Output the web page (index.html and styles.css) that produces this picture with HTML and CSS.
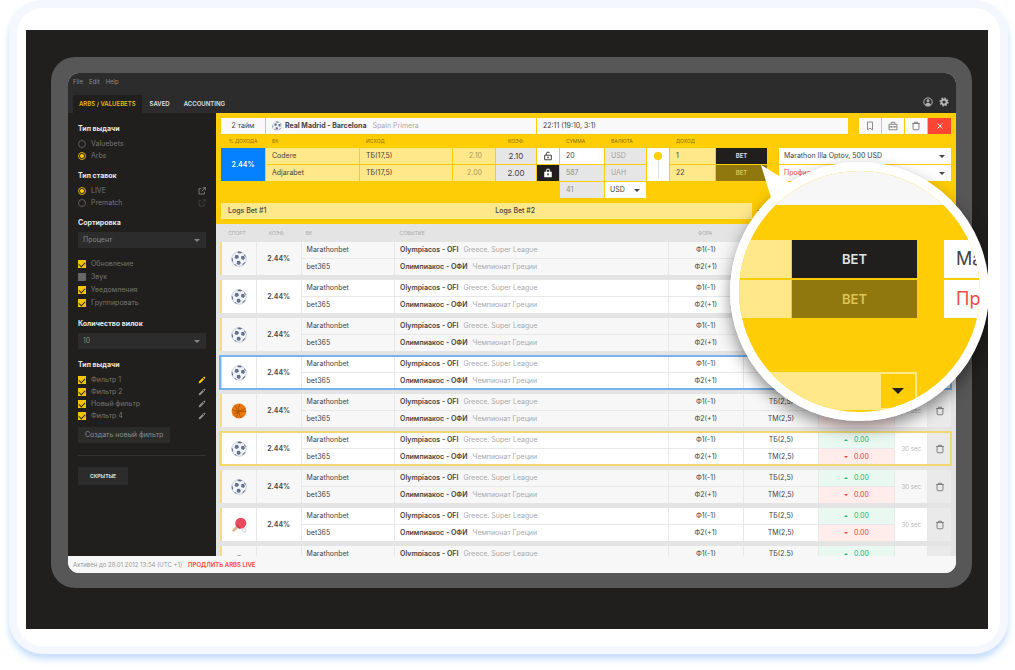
FILE: index.html
```html
<!DOCTYPE html>
<html lang="ru">
<head>
<meta charset="utf-8">
<title>Arbs / Valuebets</title>
<link rel="stylesheet" href="styles.css">
</head>
<body>
<svg class="sprite" aria-hidden="true">
  <symbol id="football" viewBox="0 0 16 16"><circle cx="8" cy="8" r="7.3" fill="#f0f3f8" stroke="#b9c1d0" stroke-width=".7"/><g fill="#66708c"><path d="M4.500 3.700l2.800.500.600 2.200-2 1.600L3.500 7zM10.200 5.300l2.400-.500 1.400 2.200-1.400 2.100-2.400-1zM6 10l2.800-.200 1.100 2.200-1.700 1.900-2.500-.900z"/><path d="M6.200.9c2-.6 3.700-.2 4.900.5l-1.500 1.200-2.300-.4zM.8 6.700l1 1.100.3 2.500-.8.4C.7 9.500.6 8 .8 6.700zM2.900 13l2 .5 1 1.400c-1.200-.3-2.200-1-3-1.900zM11.700 12.700l2.300-1.700.3.700c-.7 1.200-1.700 2.200-3 2.800zM13 3l1.400 1.600.3 1.900-1.200-1.300z"/></g></symbol>
  <symbol id="basketball" viewBox="0 0 16 16"><circle cx="8" cy="8" r="7.4" fill="#e87a0c"/><path d="M1 6.500c4 2.500 9 2 13.500-1.500M9 .8c-2 4-2 9 1 14M2 12.500c2-3 7-4.500 13-4M3.500 2.300c3 2.500 3.500 8 2 12.500" fill="none" stroke="#9a4a0c" stroke-width=".7"/></symbol>
  <symbol id="pingpong" viewBox="0 0 16 16"><path d="M5.400 8.800l1.900 1.900-4.500 4.400-1.900-1.700z" fill="#dcb28a"/><circle cx="9.800" cy="6.200" r="5.500" fill="#e84a5f"/><path d="M4.700 8.200l3.400 3.500 1.200-.4-4.300-4.400z" fill="#b3384a"/><circle cx="13.300" cy="13.300" r="1.900" fill="#f3f5f8" stroke="#b9c1d0" stroke-width=".6"/></symbol>
  <symbol id="trash" viewBox="0 0 12 12"><path d="M1.500 3h9M4 3V1.500h4V3M2.500 3v6.500q0 1 1 1h5q1 0 1-1V3" fill="none" stroke="currentColor" stroke-width="1.100"/></symbol>
  <symbol id="bookmark" viewBox="0 0 12 12"><path d="M3 1.200h6v9.500L6 8.700l-3 2z" fill="none" stroke="currentColor"/></symbol>
  <symbol id="case" viewBox="0 0 12 12"><path d="M1.200 4h9.600v6.500H1.200zM3.800 4V1.600h4.400V4M1.200 7h9.600M4 6v2M8 6v2" fill="none" stroke="currentColor"/></symbol>
  <symbol id="cross" viewBox="0 0 12 12"><path d="M3 3l6 6M9 3l-6 6" stroke="currentColor" stroke-width="1.100"/></symbol>
  <symbol id="lock-open" viewBox="0 0 12 12"><path d="M2 5h8v5.500H2zM4 5V3.300Q4 1.300 6 1.300q1.600 0 2 1.200" fill="none" stroke="currentColor" stroke-width="1.200"/><circle cx="6" cy="7.700" r="1" fill="currentColor"/></symbol>
  <symbol id="lock" viewBox="0 0 12 12"><path d="M4 5V3.300Q4 1.300 6 1.300t2 2V5" fill="none" stroke="currentColor" stroke-width="1.200"/><path fill-rule="evenodd" d="M1.500 4.500h9V11h-9zM6 6.700a1 1 0 1 0 .1 0z" fill="currentColor"/></symbol>
  <symbol id="user" viewBox="0 0 12 12"><circle cx="6" cy="6" r="5" fill="none" stroke="currentColor" stroke-width="1.200"/><circle cx="6" cy="4.500" r="1.700" fill="currentColor"/><path d="M2.600 9.200Q3.200 7 6 7t3.400 2.200Q6 12 2.600 9.200z" fill="currentColor"/></symbol>
  <symbol id="gear" viewBox="0 0 12 12"><circle cx="6" cy="6" r="3.100" fill="none" stroke="currentColor" stroke-width="2.400"/><circle cx="6" cy="6" r="4.600" fill="none" stroke="currentColor" stroke-width="1.800" stroke-dasharray="1.800 1.810"/></symbol>
  <symbol id="open" viewBox="0 0 12 12"><path d="M5 2.500H1.500v8h8V7M7 1h4v4M11 1L5.500 6.500" fill="none" stroke="currentColor" stroke-width="1.200"/></symbol>
  <symbol id="pencil" viewBox="0 0 12 12"><path d="M1 11l.5-2.700L6.800 3l2.200 2.200-5.300 5.300zM7.500 2.300L9.300.8l2 2-1.600 1.700z" fill="currentColor"/></symbol>
</svg>

<div class="card">
  <div class="stage">
    <div class="device">
      <div class="screen">
        <header>
          <nav class="menu"><a href="#">File</a><a href="#">Edit</a><a href="#">Help</a></nav>
          <div class="bar">
            <nav class="tabs"><a class="tab active" href="#">ARBS / VALUEBETS</a><a class="tab" href="#">SAVED</a><a class="tab" href="#">ACCOUNTING</a></nav>
            <div class="account">
              <button aria-label="Profile"><svg class="icon-m"><use href="#user"/></svg></button>
              <button aria-label="Settings"><svg class="icon-m"><use href="#gear"/></svg></button>
            </div>
          </div>
        </header>

        <div class="body">
          <aside>
            <section>
              <h2>Тип выдачи</h2>
              <label class="opt"><input type="radio" name="kind">Valuebets</label>
              <label class="opt"><input type="radio" name="kind" checked>Arbs</label>
            </section>
            <section>
              <h2>Тип ставок</h2>
              <div class="line"><label class="opt"><input type="radio" name="bets" checked>LIVE</label><button aria-label="Open live"><svg class="icon-s"><use href="#open"/></svg></button></div>
              <div class="line"><label class="opt"><input type="radio" name="bets">Prematch</label><button class="faint" aria-label="Open prematch"><svg class="icon-s"><use href="#open"/></svg></button></div>
            </section>
            <section class="field">
              <h2><label for="sort">Сортировка</label></h2>
              <div class="select dark"><select id="sort"><option>Процент</option></select></div>
            </section>
            <section class="checks">
              <label class="opt"><input type="checkbox" checked>Обновление</label>
              <label class="opt"><input type="checkbox">Звук</label>
              <label class="opt"><input type="checkbox" checked>Уведомления</label>
              <label class="opt"><input type="checkbox" checked>Группировать</label>
            </section>
            <section class="field">
              <h2><label for="count">Количество вилок</label></h2>
              <div class="select dark"><select id="count"><option>10</option></select></div>
            </section>
            <section>
              <h2>Тип выдачи</h2>
              <div class="line"><label class="opt"><input type="checkbox" checked>Фильтр 1</label><button class="gold" aria-label="Edit"><svg class="icon-s"><use href="#pencil"/></svg></button></div>
              <div class="line"><label class="opt"><input type="checkbox" checked>Фильтр 2</label><button aria-label="Edit"><svg class="icon-s"><use href="#pencil"/></svg></button></div>
              <div class="line"><label class="opt"><input type="checkbox" checked>Новый фильтр</label><button aria-label="Edit"><svg class="icon-s"><use href="#pencil"/></svg></button></div>
              <div class="line"><label class="opt"><input type="checkbox" checked>Фильтр 4</label><button aria-label="Edit"><svg class="icon-s"><use href="#pencil"/></svg></button></div>
              <button class="create">Создать новый фильтр</button>
            </section>
            <hr>
            <button class="hidden-bets">СКРЫТЫЕ</button>
          </aside>

          <main>
            <div class="calc">
              <div class="match">
                <div class="white center">2 тайм</div>
                <div class="white title"><svg class="icon-m"><use href="#football"/></svg><b>Real Madrid - Barcelona</b><span class="muted">Spain Primera</span></div>
                <div class="white">22:11 (19:10, 3:1)</div>
                <span></span>
                <button class="tool" aria-label="Save"><svg class="icon-m"><use href="#bookmark"/></svg></button>
                <button class="tool" aria-label="Accounting"><svg class="icon-m"><use href="#case"/></svg></button>
                <button class="tool" aria-label="Delete"><svg class="icon-m"><use href="#trash"/></svg></button>
                <button class="tool close" aria-label="Close"><svg class="icon-m"><use href="#cross"/></svg></button>
              </div>
              <div class="grid labels">
                <span class="center">% ДОХОДА</span><span>БК</span><span>ИСХОД</span><span></span><span class="center">КОЭФ.</span><span></span><span>СУММА</span><span>ВАЛЮТА</span><span></span><span>ДОХОД</span>
              </div>
              <div class="grid stakes">
                <div class="percent">2.44%</div>
                <div class="pale">Codere</div><div class="pale">ТБ(17,5)</div><div class="pale right muted2">2.10</div><div class="grey coef">2.10</div>
                <button class="lock" aria-label="Lock"><svg class="icon-m"><use href="#lock-open"/></svg></button>
                <input class="amount" aria-label="Сумма 1" value="20"><div class="grey off">USD</div>
                <div class="slider"><input type="range" aria-label="Баланс" value="0"></div>
                <div class="pale">1</div><button class="bet">BET</button><span></span>
                <div class="select light"><select aria-label="Счёт 1"><option>Marathon Illa Optov, 500 USD</option></select></div>

                <div class="pale second">Adjarabet</div><div class="pale">ТБ(17,5)</div><div class="pale right muted2">2.00</div><div class="grey coef">2.00</div>
                <button class="lock on" aria-label="Unlock"><svg class="icon-m"><use href="#lock"/></svg></button>
                <input class="amount grey" aria-label="Сумма 2" value="587"><div class="grey off">UAH</div>
                <div class="pale income">22</div><button class="bet dim">BET</button><span></span>
                <div class="select light"><select class="red" aria-label="Счёт 2"><option>Профиль</option></select></div>

                <input class="amount grey total" aria-label="Итого" value="41">
                <div class="select light currency"><select aria-label="Валюта"><option>USD</option></select></div>
              </div>
              <div class="logs"><span>Logs Bet #1</span><span>Logs Bet #2</span><button class="tri" aria-label="Expand"></button></div>
            </div>

            <div class="list">
              <table>
                <thead><tr><th>СПОРТ</th><th>КОЭФ.</th><th>БК</th><th>СОБЫТИЕ</th><th>ФОРА</th><th>ТОТАЛ</th><th></th><th></th><th></th></tr></thead>
              </table>
            </div>
          </main>
        </div>
        <footer><span>Активен до 28.01.2012 13:54 (UTC +1)</span><a href="#">ПРОДЛИТЬ ARBS LIVE</a></footer>
      </div>
    </div>

    <div class="magnifier">
      <svg class="pointer" viewBox="0 0 46 46"><path d="M0 0L42 26 14 46z" fill="#fff"/></svg>
      <div class="lens">
        <div class="lens-top"></div>
        <div class="lens-grid">
          <div class="pale"></div><button class="bet">BET</button><span></span><div class="name">Ма</div>
          <div class="pale"></div><button class="bet dim">BET</button><span></span><div class="name red">Пр</div>
        </div>
        <div class="lens-logs"><button aria-label="Expand"></button></div>
      </div>
    </div>
  </div>
</div>
<script src="app.js"></script>
</body>
</html>
```

FILE: styles.css
```css
* { box-sizing: border-box; }
body { margin: 0; background: #fff; font: 7px/16px Inter, "Noto Sans", sans-serif; color: #44433f; }
h2 { margin: 0; font-size: 7px; line-height: 12px; color: #e8e8e8; }
a { color: inherit; text-decoration: none; }
button, input, select { margin: 0; padding: 0; border: 0; border-radius: 0; background: none; font: inherit; color: inherit; appearance: none; }
button { display: flex; align-items: center; justify-content: center; }
.sprite { display: none; }
.icon-s { width: 8px; height: 8px; display: block; }
.icon-m { width: 10px; height: 10px; display: block; flex: none; }
.center { text-align: center; }

.card { margin: 0 7px 16px 9px; border: 8px solid #f4f8fe; border-radius: 34px; padding: 22px 12px 17px 9px; box-shadow: 0 5px 7px #c4ddfa; background: #fff; }
.stage { position: relative; overflow: hidden; background: #201f1d; padding: 27px 16px 41px 25px; }
.device { background: #575757; border-radius: 24px; padding: 16px 16px 15px 17px; }
.screen { border-radius: 11px; overflow: hidden; background: #f7f7f7; }

header { background: #2c2c2c; color: #8b8b8b; }
.menu { display: flex; gap: 6px; padding: 1px 5px 0; font-size: 6px; }
.bar { display: flex; justify-content: space-between; padding: 5px 7px 0 5px; }
.tabs { display: flex; gap: 2px; font-size: 6px; font-weight: 600; color: #e0e0e0; }
.tab { padding: 1px 6px; }
.active { background: #201f1d; color: #e2b90c; }
.account { display: flex; gap: 6px; color: #b5b5b5; padding-bottom: 5px; }

.body { display: grid; grid-template-columns: 148fr 740fr; }
aside { background: #201f1d; color: #757575; padding: 10px 10px 0; }
section { margin-bottom: 8px; }
section h2 { margin-bottom: 3px; }
.field { margin-bottom: 10px; }
.opt { display: flex; align-items: center; gap: 5px; line-height: 12px; }
.line { display: flex; justify-content: space-between; align-items: center; color: #8d8d8d; }
.line .opt { color: #757575; }
.line .faint { color: #444; }
.line .gold { color: #ffcd05; }
.opt input { width: 8px; height: 8px; display: grid; place-items: center; }
.opt input[type=radio] { border: 1px solid #5c5c5c; border-radius: 50%; }
.opt input[type=radio]:checked { border-color: #d8ae08; }
.opt input[type=radio]:checked::after { content: ""; width: 4px; height: 4px; border-radius: 50%; background: #ffcd05; }
.opt input[type=checkbox] { background: #666; }
.opt input[type=checkbox]:checked { background: #f3c30a; }
.opt input[type=checkbox]:checked::after { content: ""; width: 5px; height: 3px; border: solid #35300f; border-width: 0 0 1px 1px; transform: rotate(-45deg); }
.checks { display: grid; gap: 1px; margin-bottom: 9px; }
.select { display: grid; align-items: center; }
.select select { grid-area: 1 / 1; width: 100%; height: 16px; padding: 0 5px; }
.select::after { content: ""; grid-area: 1 / 1; justify-self: end; margin-right: 6px; border: solid transparent; border-width: 3px 3px 0; border-top-color: currentColor; pointer-events: none; }
.dark { background: #2c2c2c; color: #858585; }
.light { background: #fff; }
.red, .select .red { color: #ef4b45; }
.create { background: #2b2b2a; color: #8b8b8b; padding: 0 7px; margin-top: 5px; }
hr { border: 0; border-top: 1px solid #333230; margin: 12px 0 11px; }
.hidden-bets { background: #2c2c2c; color: #e0e0e0; font-size: 5px; font-weight: 700; padding: 1px 12px; }

main { background: #e4e4e4; min-width: 0; }
.calc { background: #ffcd05; padding: 5px; }
.match { display: grid; gap: 1px; grid-template-columns: 44fr 270fr 311fr 9fr 22fr 22fr 22fr 23fr; }
.white { background: #f9f9f9; padding: 0 6px; white-space: nowrap; }
.title { display: flex; align-items: center; gap: 3px; }
.title .muted { margin-left: 3px; }
.muted { color: #aaa; }
.tool { background: #f9f9f9; color: #777; }
.close { background: #ff4436; color: #fff; }
.grid { display: grid; gap: 1px; grid-template-columns: 44fr 93fr 92fr 42fr 40fr 22fr 44fr 41fr 22fr 45fr 51fr 10fr 172fr; }
.labels { font-size: 5px; line-height: 14px; color: #8a7006; }
.labels span { padding-left: 6px; }
.labels .center { padding: 0; }
.stakes > * { min-width: 0; }
.percent { grid-row: 1 / span 2; background: #0580ff; color: #fff; display: grid; place-items: center; font-weight: 600; }
.pale { background: #ffe88a; padding: 0 6px; }
.second { grid-column: 2; }
.right { text-align: right; padding-right: 13px; }
.muted2 { color: #a79b62; }
.grey { background: #e6e6e6; }
.coef { text-align: center; font-size: 8px; }
.off { color: #a2a2a2; padding: 0 6px; }
.lock { background: #fff; }
.lock.on { background: #201f1d; color: #fff; }
.amount { background: #fff; padding: 0 6px; height: 16px; width: 100%; }
.amount.grey { background: #e6e6e6; color: #8a8a8a; }
.slider { grid-row: 1 / span 2; grid-column: 9; background: #fff; display: grid; place-items: center; }
.slider input { writing-mode: vertical-lr; width: 8px; height: 26px; background: linear-gradient(#ddd, #ddd) center / 1px 100% no-repeat; }
.slider input::-webkit-slider-thumb { appearance: none; width: 8px; height: 8px; border-radius: 50%; background: #ffcd05; }
.income { grid-column: 10; }
.bet { background: #201f1d; color: #e4e4e4; font-size: 6px; font-weight: 600; }
.bet.dim { background: #90780f; color: #dfc355; }
.total { grid-column: 7; }
.logs { display: grid; grid-template-columns: 267fr 264fr 16fr; width: 75%; margin-top: 5px; font-weight: 500; background: #ffe88a; }
.logs span { padding-left: 7px; }
.tri { background: #ffcd05; }
.tri::after { content: ""; border: solid transparent; border-width: 3px 3px 0; border-top-color: #44433f; }

.list { height: 332px; overflow: hidden; padding: 0 5px 0 4px; }
table { display: grid; gap: 5px; }
thead tr, tbody { display: grid; grid-template-columns: 34fr 44fr 93fr 274fr 75fr 74fr 76fr 32fr 23fr; column-gap: 1px; }
thead { display: block; font-size: 5px; color: #aaa; line-height: 18px; margin-bottom: -5px; }
th { font-weight: 400; padding: 0; text-align: center; min-width: 0; }
th:nth-child(3), th:nth-child(4) { text-align: left; padding-left: 6px; }
tbody { row-gap: 1px; background: #e8e8e8; border-left: 2px solid #f5dc80; }
tbody tr { display: contents; }
td { padding: 0 5px; background: #fff; white-space: nowrap; min-width: 0; }
.shade td { background: #f7f7f7; }
td[rowspan] { grid-row: 1 / span 2; display: grid; place-items: center; padding: 0; }
.book { grid-column: 3; }
.event { grid-column: 4; }
.handicap { grid-column: 5; }
.totals { grid-column: 6; }
.up, .down { grid-column: 7; }
.ball { width: 16px; height: 16px; display: block; }
.sport { grid-column: 1; }
.pct { grid-column: 2; font-weight: 600; }
td.handicap, td.totals { text-align: center; }
td b { margin-right: 5px; font-weight: 600; }
td.up, td.down { display: flex; align-items: center; justify-content: center; gap: 6px; }
tbody td.up { background: #e9f9f1; color: #24b574; }
tbody td.down { background: #ffeceb; color: #ee423f; }
.up::before, .down::before { content: ""; border: 2px solid transparent; }
.up::before { border-width: 0 2px 2px; border-bottom-color: currentColor; }
.down::before { border-width: 2px 2px 0; border-top-color: currentColor; }
td.sec { grid-column: 8; color: #b5b5b5; font-size: 6px; }
tbody td.del { grid-column: 9; background: #eaeaea; color: #777; }
.blue { outline: 2px solid #75b2f0; outline-offset: -1px; }
.yellow { outline: 2px solid #f2d873; outline-offset: -1px; }

footer { display: flex; gap: 6px; padding: 0 5px; font-size: 6px; line-height: 17px; color: #999; background: #f7f7f7; }
footer a { color: #ff4436; font-size: 6px; font-weight: 600; }

.magnifier { position: absolute; top: 132px; right: -1px; width: 259px; height: 259px; border-radius: 50%; box-shadow: 0 7px 16px rgba(0, 0, 0, .45); }
.pointer { position: absolute; left: 31px; top: 3px; width: 46px; height: 46px; }
.lens { position: absolute; inset: 0; overflow: hidden; border: 9px solid #fff; border-radius: 50%; background: #ffcd05; font-size: 18px; line-height: 38px; }
.lens-top { height: 34px; background: #f7f7f7; }
.lens-grid { display: grid; grid-template-columns: 52fr 125fr 25fr 36fr; gap: 2px 1px; margin-top: 35px; }
.lens .bet { font-size: 13px; font-weight: 600; }
.name { background: #fff; padding-left: 12px; white-space: nowrap; overflow: hidden; }
.lens-logs { display: flex; justify-content: flex-end; width: 178px; margin-top: 54px; padding: 2px; background: #ffe88a; }
.lens-logs button { width: 34px; height: 34px; background: #ffcd05; }
.lens-logs button::after { content: ""; border: solid transparent; border-width: 6px 6px 0; border-top-color: #201f1d; }
```

FILE: app.js
```js
const matches = [
  { ball: "football", cls: "shade" },
  { ball: "football", cls: "" },
  { ball: "football", cls: "shade" },
  { ball: "football", cls: "blue" },
  { ball: "basketball", cls: "shade" },
  { ball: "football", cls: "yellow" },
  { ball: "football", cls: "shade" },
  { ball: "pingpong", cls: "" },
  { ball: "football", cls: "shade" }
];

document.querySelector("table").insertAdjacentHTML("beforeend", matches.map(m => `
  <tbody class="${m.cls}">
    <tr>
      <td rowspan="2" class="sport"><svg class="ball"><use href="#${m.ball}"/></svg></td>
      <td rowspan="2" class="pct">2.44%</td>
      <td class="book">Marathonbet</td>
      <td class="event"><b>Olympiacos - OFI</b><span class="muted">Greece. Super League</span></td>
      <td class="handicap">Ф1(-1)</td>
      <td class="totals">ТБ(2,5)</td>
      <td class="up">0.00</td>
      <td rowspan="2" class="sec">30 sec</td>
      <td rowspan="2" class="del"><svg class="icon-m"><use href="#trash"/></svg></td>
    </tr>
    <tr>
      <td class="book">bet365</td>
      <td class="event"><b>Олимпиакос - ОФИ</b><span class="muted">Чемпионат Греции</span></td>
      <td class="handicap">Ф2(+1)</td>
      <td class="totals">ТМ(2,5)</td>
      <td class="down">0.00</td>
    </tr>
  </tbody>`).join(""));
```
